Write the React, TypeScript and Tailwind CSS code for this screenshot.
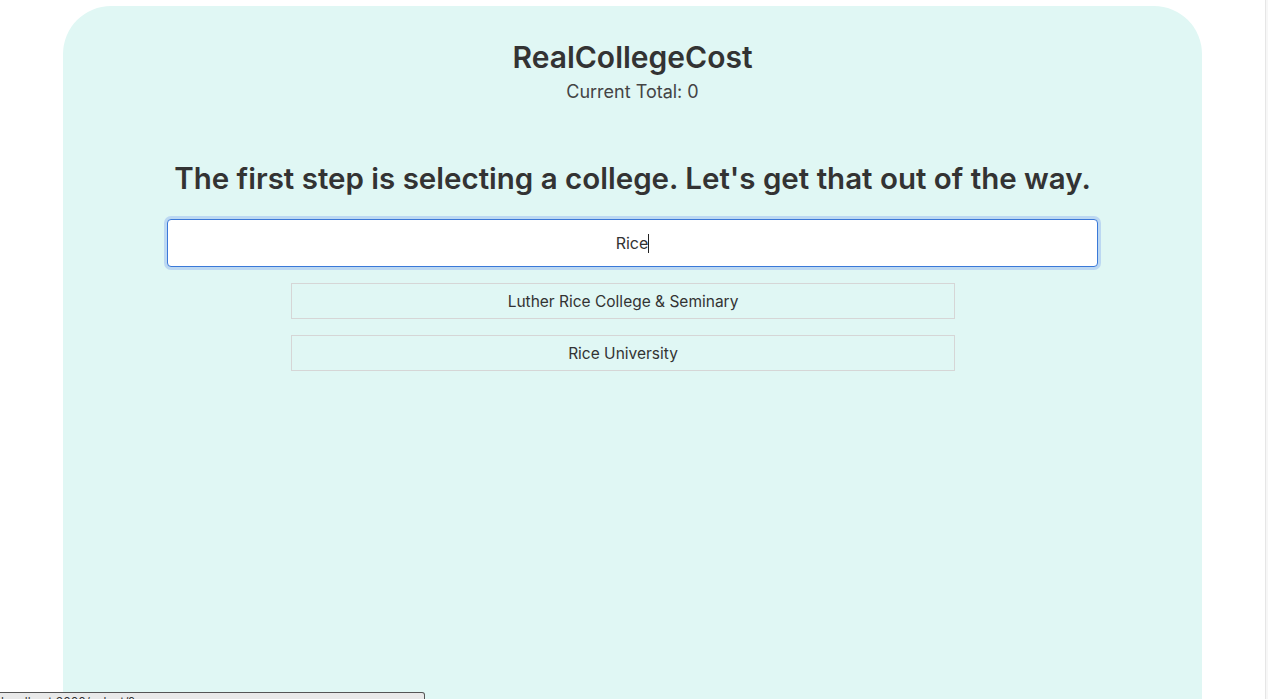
import React from "react";

const colleges = ["Luther Rice College & Seminary", "Rice University"];

const App: React.FC = () => {
  return (
    <div
      className="flex min-h-screen bg-white text-[#333333]"
      style={{ fontFamily: "Inter, 'Noto Sans', sans-serif" }}
    >
      <div className="flex-1">
        <div className="mx-[63px] mt-[6px] min-h-[800px] rounded-[48px] bg-[#e0f7f4] pt-[31px]">
          <h1 className="text-center text-[30px] font-semibold leading-[40px]">
            RealCollegeCost
          </h1>
          <p className="mt-[3px] text-center text-[18px] leading-[24px] text-[#444]">
            Current Total: 0
          </p>
          <h2 className="mt-[54px] text-center text-[29.5px] font-semibold leading-[40px]">
            The first step is selecting a college. Let's get that out of the way.
          </h2>
          <div className="mx-[104px] mt-[21px]">
            <div className="flex h-[48px] items-center justify-center rounded-[4px] border border-[#3b79d8] bg-white shadow-[0_0_0_3px_#bcd8f2]">
              <span className="text-[16px] text-[#333]">Rice</span>
              <span className="h-[19px] w-px bg-[#222]" />
            </div>
          </div>
          <div className="ml-[228px] mt-[16px] flex w-[664px] flex-col gap-[16px]">
            {colleges.map((name) => (
              <div
                key={name}
                className="flex h-[36px] items-center justify-center border border-[#d6d6d6] pt-[2px] text-[15.5px] text-[#333]"
              >
                {name}
              </div>
            ))}
          </div>
        </div>
      </div>
      <div className="w-[3px] shrink-0 border-l border-[#e6e6e6] bg-[#f7f7f7]" />
      <div className="fixed left-0 top-[692px] h-[22px] w-[425px] rounded-tr-[3px] border border-l-0 border-[#555] bg-[#e9e9e9] pl-[1px] text-[12px] leading-[18px] text-[#333]">
        localhost:3000/select/?
      </div>
    </div>
  );
};

export default App;
